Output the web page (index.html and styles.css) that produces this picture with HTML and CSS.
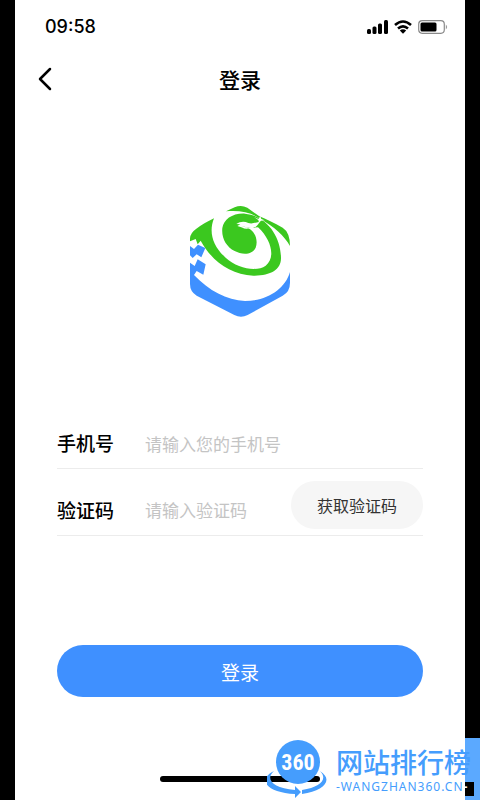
FILE: index.html
```html
<!DOCTYPE html>
<html lang="zh-CN">
<head>
  <meta charset="UTF-8">
  <meta name="viewport" content="width=device-width, initial-scale=1">
  <title>登录</title>
  <link rel="stylesheet" href="styles.css">
</head>
<body>
  <div class="phone">
    <div class="status-bar">
      <span class="time">09:58</span>
      <div class="status-icons">
        <svg width="21" height="14" viewBox="0 0 21 14">
          <rect x="0" y="9" width="4" height="5" rx="1.5"/>
          <rect x="5.5" y="6.5" width="4" height="7.5" rx="1.5"/>
          <rect x="11" y="3.5" width="4" height="10.5" rx="1.5"/>
          <rect x="17" y="0" width="4" height="14" rx="1.5"/>
        </svg>
        <svg width="18" height="14" viewBox="0 0 18 14">
          <path d="M1 5 Q9 -2 17 5M4 8.5 Q9 4.2 14 8.5" fill="none" stroke="#000" stroke-width="2.6"/>
          <path d="M5.8 10.5 Q9 8 12.2 10.5 L9 13.8Z"/>
        </svg>
        <svg width="30" height="14" viewBox="0 0 30 14">
          <rect x=".7" y=".7" width="25.6" height="12.6" rx="3.5" fill="#fff" stroke="#8a8a8a" stroke-width="1.2"/>
          <rect x="2.5" y="2.5" width="16" height="9" rx="1.5"/>
          <path d="M27.8 4.5 Q30.5 7 27.8 9.5Z" fill="#999"/>
        </svg>
      </div>
    </div>
    <header class="nav">
      <button class="back" type="button" aria-label="返回">
        <svg width="14" height="24" viewBox="0 0 14 24"><path d="M12 2 L2 12 L12 22" fill="none" stroke="#000" stroke-width="2.5" stroke-linecap="round" stroke-linejoin="round"/></svg>
      </button>
      <h1>登录</h1>
    </header>
    <svg class="logo" width="120" height="130" viewBox="0 0 360 390">
      <g fill="#3bc81f">
        <path d="M138 49 L164 37 Q183 28 202 38 L238 64 C258 72 283 85 308 98 Q330 112 330 153 C314 124 282 95 238 70 C211 51 178 46 138 49Z"/>
        <path d="M30 139 V130 Q31 114 48 102 C64 90 82 80 102 70 C85 112 99 154 137 188 C172 220 229 232 257 212 C286 190 277 137 234 97 L204 99 C226 109 235 137 227 158 C216 181 185 179 164 168 C138 154 124 129 127 99 C131 73 158 54 195 56 C260 62 303 125 303 190 C303 225 270 243 220 242 C150 238 98 201 62 137 L53 148 L47 132Z"/>
      </g>
      <path fill="#fff" d="M169 87 C181 79 193 78 205 84 C217 88 228 82 239 80 C234 89 229 97 218 99 C204 101 196 94 184 93 L208 100 C193 105 185 95 172 93 L181 88Z"/>
      <path d="M222 66 L235 72 L241 64 L244 72 L254 76 L243 77 L237 83 L235 75Z" fill="#fff"/>
      <g fill="#3f90ff">
        <path d="M30 153 L42 162 L54 149 L76 159 L64 187 L50 178 L38 189 L30 181Z"/>
        <path d="M53 193 L77 208 L70 239 L50 228 L42 240 C87 287 140 316 195 318 C260 318 315 283 330 231 V263 Q330 290 308 302 L203 360 Q183 370 163 360 L50 302 Q30 290 30 267 V203 L44 213Z"/>
      </g>
    </svg>
    <form class="login-form">
      <div class="field">
        <label for="phone">手机号</label>
        <input id="phone" type="tel" placeholder="请输入您的手机号">
      </div>
      <div class="field">
        <label for="code">验证码</label>
        <input id="code" type="text" placeholder="请输入验证码">
        <button class="code-btn" type="button">获取验证码</button>
      </div>
      <button class="login-btn" type="submit">登录</button>
    </form>
    <div class="home-bar"></div>
  </div>
  <div class="watermark">
    <svg width="60" height="62" viewBox="0 0 60 62">
      <circle cx="31" cy="24" r="22" fill="#459dfd"/>
      <path d="M7 33 C-2 41 5 50 28 52 V48 L34 54 L28 60 V56 C1 55 -11 42 7 33Z" fill="#459dfd"/>
      <path d="M53 33 C67 42 57 53 35 56 V52 C54 49 61 41 53 33Z" fill="#459dfd"/>
      <text x="31" y="32" text-anchor="middle" class="mark-num">360</text>
    </svg>
    <div class="mark-text">
      <strong>网站排行榜</strong>
      <span>-WANGZHAN360.CN<b>-</b></span>
    </div>
    <div class="mark-edge"><i></i></div>
  </div>
</body>
</html>
```
FILE: styles.css
```css
* { box-sizing:border-box; margin:0; padding:0; }
body {
  position:relative; min-height:100vh; padding:0 15px; background:#000; color:#000;
  font-family:"Noto Sans CJK SC",sans-serif;
}
button { border:none; background:none; font-family:inherit; cursor:pointer; }
.phone { min-height:100vh; background:#fff; display:flex; flex-direction:column; }
.status-bar { height:53px; padding:0 17px 0 30px; display:flex; align-items:center; justify-content:space-between; }
.time { font:500 18px/24px Inter,sans-serif; }
.status-icons { display:flex; gap:6px; }
.nav { height:52px; padding:0 22px; display:grid; grid-template-columns:1fr auto 1fr; align-items:center; }
.nav h1 { font-size:21px; line-height:32px; font-weight:500; }
.back { width:16px; height:32px; display:flex; align-items:center; justify-content:center; }
.logo { display:block; margin:90px auto 93px; }
.login-form { padding:0 42px; }
.field { height:51px; border-bottom:1px solid #ececec; display:flex; align-items:center; }
.field + .field { height:67px; padding-top:15px; }
.field label { width:88px; flex:none; font-size:19px; line-height:28px; font-weight:500; }
.field input { flex:1; min-width:0; height:32px; border:none; outline:none; background:none; font-family:inherit; font-size:17px; }
.field input::placeholder { color:#c4c4c4; opacity:1; }
.code-btn { width:132px; height:48px; flex:none; align-self:flex-end; margin-bottom:6px; border-radius:24px; background:#f6f6f6; color:#333; font-size:16px; }
.login-btn { display:block; width:100%; height:52px; margin-top:109px; border-radius:26px; background:#3f90ff; color:#fff; font-size:19px; }
.home-bar { width:160px; height:6px; margin:auto auto 18px; border-radius:3px; background:#000; }

/* site mark over the bottom right corner */
.watermark { position:absolute; right:0; bottom:0; z-index:1; height:62px; display:flex; color:#459dfd; }
.mark-num { font:700 22px "Liberation Sans Narrow","Roboto Condensed",Roboto,sans-serif; fill:#fff; }
.mark-text { width:153px; padding:8px 0 0 9px; white-space:nowrap; }
.mark-text strong { display:block; font-size:27px; line-height:32px; font-weight:500; }
.mark-text span { display:block; font:12px/18px "Noto Sans",sans-serif; letter-spacing:1px; }
.mark-text b { color:#fff; }
.mark-edge { position:absolute; right:0; bottom:0; z-index:-1; width:15px; height:62px; background:#5ba9ff; }
.mark-edge i { display:block; width:9px; height:14px; margin-top:44px; background:#000; }
```
